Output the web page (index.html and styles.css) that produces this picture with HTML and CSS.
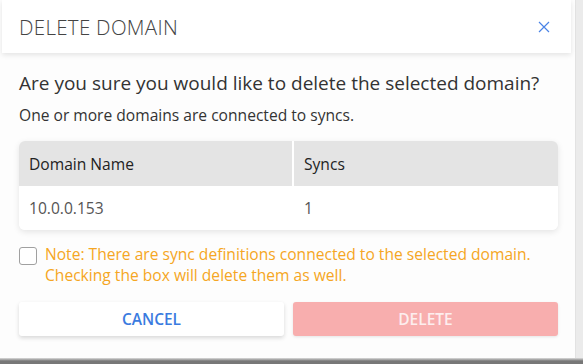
FILE: index.html
```html
<!DOCTYPE html>
<html>

<head>
    <link rel="stylesheet" href="styles.css">
</head>

<body>
    <div class="modal">
        <div class="modal-header">
            <h2>DELETE DOMAIN</h2>
            <button class="close-btn" title="Close">
                <svg width="12" height="12" viewBox="0 0 12 12">
                    <path d="M1 1 L11 11 M11 1 L1 11" stroke="#4a83e6" stroke-width="1.2" fill="none" />
                </svg>
            </button>
        </div>

        <div class="modal-body">
            <p class="question">Are you sure you would like to delete the selected domain?</p>
            <p class="sub">One or more domains are connected to syncs.</p>

            <table class="domain-table">
                <tr>
                    <th class="col-name">Domain Name</th>
                    <th>Syncs</th>
                </tr>
                <tr>
                    <td>10.0.0.153</td>
                    <td>1</td>
                </tr>
            </table>

            <label class="note">
                <span class="checkbox"></span>
                <span>Note: There are sync definitions connected to the selected domain. Checking the box will delete them as well.</span>
            </label>

            <div class="actions">
                <button class="btn btn-cancel">CANCEL</button>
                <button class="btn btn-delete">DELETE</button>
            </div>
        </div>
    </div>
    <div class="backdrop-edge"></div>
</body>

</html>
```

FILE: styles.css
```css
html {
    background-color: #ebebeb;
}

body {
    margin: 0;
    font-family: "Open Sans", Arial, sans-serif;
    width: 583px;
    height: 364px;
    overflow: hidden;
}

.modal {
    width: 576px;
    height: 358px;
    background-color: #fdfdfd;
    box-sizing: border-box;
    border-right: 1px solid #e2e2e2;
}

.modal-header {
    height: 53px;
    margin: 0 4px 0 2px;
    padding: 0 21px 0 17px;
    display: flex;
    justify-content: space-between;
    align-items: center;
    background-color: white;
    box-shadow: 0 2px 5px rgba(0, 0, 0, 0.1);
}

.modal-header h2 {
    margin: 0;
    font-size: 20.5px;
    font-weight: 300;
    color: #444;
    letter-spacing: 0.3px;
}

.close-btn {
    background: none;
    border: none;
    padding: 0;
    cursor: pointer;
    display: flex;
}

.modal-body {
    padding: 0 18px 0 19px;
}

.question {
    margin: 17px 0 0;
    font-size: 19px;
    line-height: 26px;
    color: #333;
}

.sub {
    margin: 8px 0 0;
    font-size: 15.6px;
    line-height: 22px;
    color: #333;
}

.domain-table {
    width: 539px;
    margin-top: 15px;
    border-collapse: separate;
    border-spacing: 0;
    border-radius: 6px;
    box-shadow: 0 2px 6px rgba(0, 0, 0, 0.1);
    overflow: hidden;
    font-size: 15.6px;
}

.domain-table th {
    height: 45px;
    padding: 0 10px;
    text-align: left;
    font-weight: 400;
    color: #222;
    background-color: #e4e4e4;
}

.domain-table th.col-name {
    width: 253px;
    border-right: 2px solid white;
}

.domain-table td {
    height: 44px;
    padding: 0 10px;
    color: #555;
    background-color: white;
}

.note {
    display: flex;
    gap: 8px;
    margin-top: 14px;
    font-size: 15.6px;
    line-height: 21px;
    color: #f5a623;
}

.checkbox {
    flex: none;
    width: 18px;
    height: 18px;
    margin-top: 3px;
    border: 1px solid #a0a0a0;
    border-radius: 3px;
    box-sizing: border-box;
    background-color: white;
}

.actions {
    display: flex;
    gap: 9px;
    margin-top: 16px;
    width: 539px;
}

.btn {
    flex: 1;
    height: 34px;
    border: none;
    border-radius: 3px;
    font-family: "Open Sans", Arial, sans-serif;
    font-size: 15.5px;
    font-weight: 600;
    cursor: pointer;
}

.btn-cancel {
    background-color: white;
    color: #3a7be0;
    box-shadow: 0 2px 4px rgba(0, 0, 0, 0.15);
}

.btn-delete {
    background-color: #f8aeae;
    color: #fdeeee;
    box-shadow: 0 1px 3px rgba(0, 0, 0, 0.1);
}

.backdrop-edge {
    height: 6px;
    background: linear-gradient(#dcdcdc, #777 50%);
}
```
